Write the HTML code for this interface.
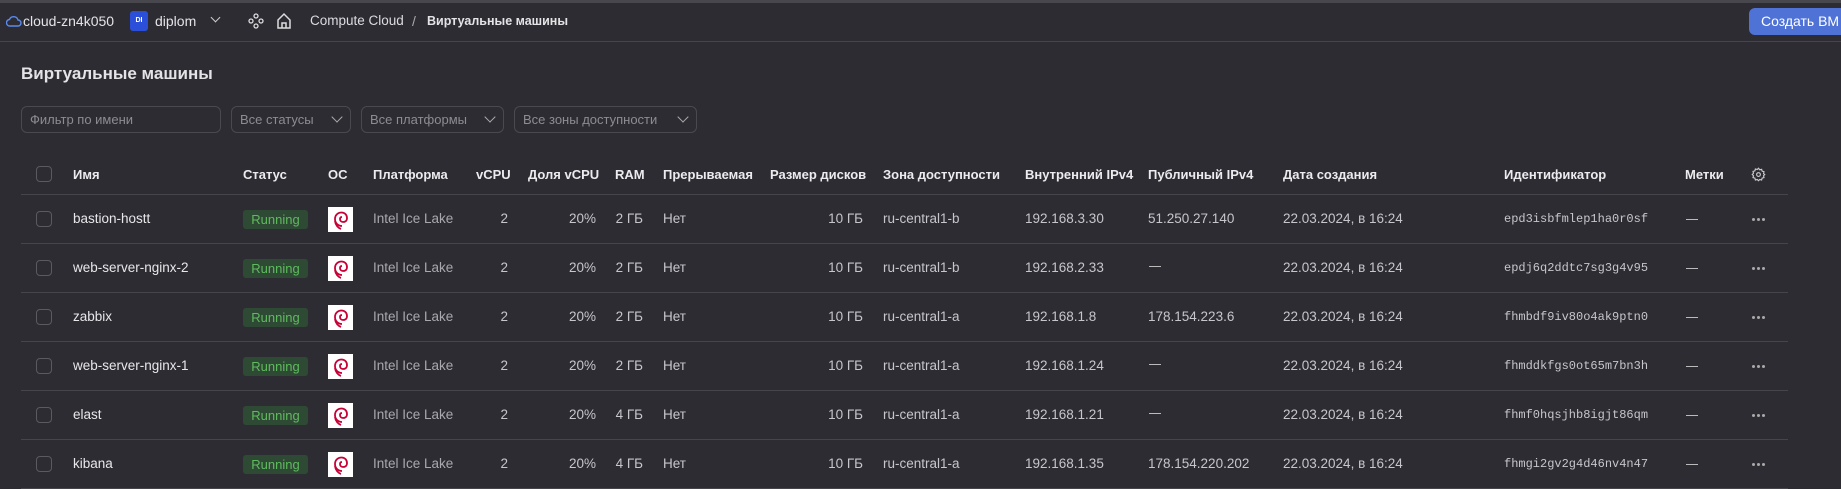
<!DOCTYPE html>
<html><head><meta charset="utf-8"><style>
*{margin:0;padding:0;box-sizing:border-box}
body{width:1841px;height:488px;overflow:hidden;background:#2d2c33;font-family:"Liberation Sans",sans-serif;color:#e4e4e6;position:relative;font-size:14px}
.a{position:absolute;white-space:nowrap}
.top{position:absolute;left:0;top:0;width:1841px;height:3px;background:#48474d}
.hl{position:absolute;left:0;top:41px;width:1841px;height:1px;background:#46454b}
.btn{position:absolute;left:1749px;top:8px;width:100px;height:27px;background:#4f72d6;border-radius:6px;color:#fff;font-size:14px;line-height:27px;padding-left:12px}
.inp{position:absolute;top:106px;height:27px;border:1px solid #4a4950;border-radius:6px;color:#8d8c92;font-size:13px;line-height:25px;padding-left:8px}
.chev{position:absolute;right:9px;top:6px;width:8px;height:8px;border-right:1.5px solid #aaa;border-bottom:1.5px solid #aaa;transform:rotate(45deg)}
.line{position:absolute;left:21px;width:1767px;height:1px;background:#46454b}
.th{position:absolute;top:167px;font-weight:bold;font-size:13px;color:#ececee}
.cb{position:absolute;left:36px;width:16px;height:16px;border:1px solid #5b5a60;border-radius:4px}
.c{position:absolute;font-size:13.5px;color:#c7c6cb}
.r{text-align:right}
.run{position:absolute;left:243px;width:65px;height:19px;background:#2f4a34;color:#5fba5f;border-radius:3px;font-size:13px;text-align:center;line-height:19px}
.os{position:absolute;left:328px;width:25px;height:25px;background:#fff}
.id{position:absolute;left:1504px;font-family:"Liberation Mono",monospace;font-size:12px;color:#c7c6cb}
.dash{position:absolute;left:1686px;width:12px;height:1px;background:#bbb}
.dots{position:absolute;left:1752px;width:14px;height:3px}
.dots i{position:absolute;top:0;width:3px;height:3px;border-radius:50%;background:#aaa}
</style></head><body>
<div class="top"></div>
<svg class="a" style="left:6px;top:14px" width="16" height="14" viewBox="0 0 16 14"><path d="M4 12h8a3 3 0 0 0 0-6 4.5 4.5 0 0 0-8.5-.5A3.2 3.2 0 0 0 4 12z" fill="none" stroke="#5a8bf0" stroke-width="1.4"/></svg>
<div class="a" style="left:23px;top:13px;font-size:14px">cloud-zn4k050</div>
<div class="a" style="left:130px;top:11px;width:18px;height:20px;background:#2b4fd9;border-radius:3px;font-size:7px;font-weight:bold;color:#fff;text-align:center;line-height:20px">DI</div>
<div class="a" style="left:155px;top:13px;font-size:14px">diplom</div>
<div class="a" style="left:212px;top:14px;width:7px;height:7px;border-right:1.5px solid #ccc;border-bottom:1.5px solid #ccc;transform:rotate(45deg)"></div>
<svg class="a" style="left:248px;top:13px" width="16" height="16" viewBox="0 0 16 16" fill="none" stroke="#ddd" stroke-width="1.3"><circle cx="8" cy="3" r="2"/><circle cx="3" cy="8" r="2"/><circle cx="13" cy="8" r="2"/><circle cx="8" cy="13" r="2"/></svg>
<svg class="a" style="left:276px;top:12px" width="16" height="18" viewBox="0 0 16 18" fill="none" stroke="#ddd" stroke-width="1.5"><path d="M2 8L8 2l6 6v8H2z"/><path d="M6 16v-5h4v5"/></svg>
<div class="a" style="left:310px;top:13px;font-size:13.5px;color:#dcdce0">Compute Cloud</div>
<div class="a" style="left:412px;top:13px;font-size:14px;color:#aaa">/</div>
<div class="a" style="left:427px;top:14px;font-size:12.5px;font-weight:bold">Виртуальные машины</div>
<div class="btn">Создать ВМ</div>
<div class="hl"></div>
<div class="a" style="left:21px;top:64px;font-size:17px;font-weight:bold">Виртуальные машины</div>
<div class="inp" style="left:21px;width:200px">Фильтр по имени</div>
<div class="inp" style="left:231px;width:120px">Все статусы<span class="chev"></span></div>
<div class="inp" style="left:361px;width:143px">Все платформы<span class="chev"></span></div>
<div class="inp" style="left:514px;width:183px">Все зоны доступности<span class="chev"></span></div>
<div class="cb" style="top:166px"></div>
<div class="th" style="left:73px">Имя</div>
<div class="th" style="left:243px">Статус</div>
<div class="th" style="left:328px">ОС</div>
<div class="th" style="left:373px">Платформа</div>
<div class="th" style="left:476px">vCPU</div>
<div class="th" style="left:528px">Доля vCPU</div>
<div class="th" style="left:615px">RAM</div>
<div class="th" style="left:663px">Прерываемая</div>
<div class="th" style="left:770px">Размер дисков</div>
<div class="th" style="left:883px">Зона доступности</div>
<div class="th" style="left:1025px">Внутренний IPv4</div>
<div class="th" style="left:1148px">Публичный IPv4</div>
<div class="th" style="left:1283px">Дата создания</div>
<div class="th" style="left:1504px">Идентификатор</div>
<div class="th" style="left:1685px">Метки</div>
<svg class="a" style="left:1751px;top:167px" width="15" height="15" viewBox="0 0 24 24" fill="none" stroke="#ccc" stroke-width="1.8"><circle cx="12" cy="12" r="3"/><path d="M12 2l2 2.5 3-.8.8 3 3 .8-.8 3L22 12l-2 2 .8 3-3 .8-.8 3-3-.8L12 22l-2-2-3 .8-.8-3-3-.8.8-3L2 12l2-2-.8-3 3-.8.8-3 3 .8z"/></svg>
<div class="line" style="top:194px"></div>
<div id="rows"></div>
<script>
var d=[["bastion-hostt","2 ГБ","ru-central1-b","192.168.3.30","51.250.27.140","epd3isbfmlep1ha0r0sf"],
["web-server-nginx-2","2 ГБ","ru-central1-b","192.168.2.33","","epdj6q2ddtc7sg3g4v95"],
["zabbix","2 ГБ","ru-central1-a","192.168.1.8","178.154.223.6","fhmbdf9iv80o4ak9ptn0"],
["web-server-nginx-1","2 ГБ","ru-central1-a","192.168.1.24","","fhmddkfgs0ot65m7bn3h"],
["elast","4 ГБ","ru-central1-a","192.168.1.21","","fhmf0hqsjhb8igjt86qm"],
["kibana","4 ГБ","ru-central1-a","192.168.1.35","178.154.220.202","fhmgi2gv2g4d46nv4n47"]];
var h="";
d.forEach(function(r,i){var c=218+i*49,t=c-7;
h+='<div class="cb" style="top:'+(c-7)+'px"></div>';
h+='<div class="c" style="left:73px;top:'+t+'px;color:#e8e8ea">'+r[0]+'</div>';
h+='<div class="run" style="top:'+(c-8)+'px">Running</div>';
h+='<div class="os" style="top:'+(c-11)+'px"><svg width="25" height="25" viewBox="0 0 25 25" fill="none" stroke="#c70036" stroke-width="1.8"><path d="M14 19c-4 0-7-3-7-7s3-6.5 6.5-6.5 5.5 2.5 5.5 5.5-2 4-4 4-3-1.5-3-3 1-2 2-2"/><path d="M7 14c.5 4 3 7 6 8"/></svg></div>';
h+='<div class="c" style="left:373px;top:'+t+'px;color:#a9a8ae">Intel Ice Lake</div>';
h+='<div class="c r" style="left:470px;width:38px;top:'+t+'px">2</div>';
h+='<div class="c r" style="left:540px;width:56px;top:'+t+'px">20%</div>';
h+='<div class="c r" style="left:605px;width:38px;top:'+t+'px">'+r[1]+'</div>';
h+='<div class="c" style="left:663px;top:'+t+'px">Нет</div>';
h+='<div class="c r" style="left:800px;width:63px;top:'+t+'px">10 ГБ</div>';
h+='<div class="c" style="left:883px;top:'+t+'px">'+r[2]+'</div>';
h+='<div class="c" style="left:1025px;top:'+t+'px">'+r[3]+'</div>';
h+=r[4]?'<div class="c" style="left:1148px;top:'+t+'px">'+r[4]+'</div>':'<div class="dash" style="left:1149px;top:'+(c-1)+'px"></div>';
h+='<div class="c" style="left:1283px;top:'+t+'px">22.03.2024, в 16:24</div>';
h+='<div class="id" style="top:'+(t+1)+'px">'+r[5]+'</div>';
h+='<div class="dash" style="top:'+(c+1)+'px"></div>';
h+='<div class="dots" style="top:'+c+'px"><i style="left:0"></i><i style="left:5px"></i><i style="left:10px"></i></div>';
h+='<div class="line" style="top:'+(243+i*49)+'px"></div>';});
document.getElementById("rows").innerHTML=h;
</script>
</body></html>
